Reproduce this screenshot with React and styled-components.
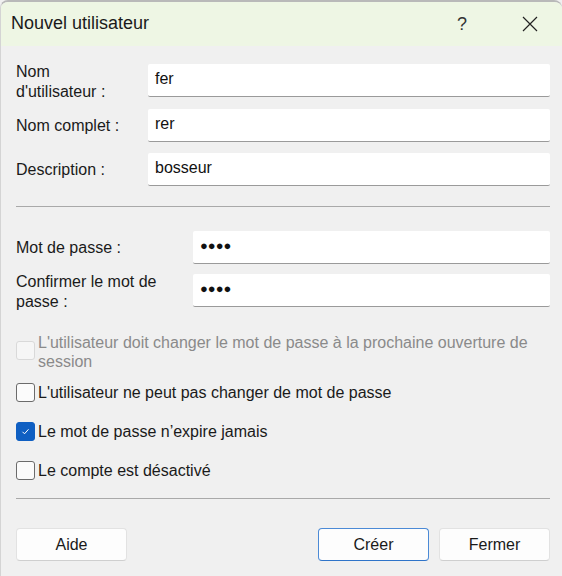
import React from 'react';
import styled, { createGlobalStyle } from 'styled-components';

const Global = createGlobalStyle`
  html, body { margin: 0; padding: 0; background: #f0f0f0; }
  body { font-family: "Liberation Sans", Arial, sans-serif; }
`;

const Window = styled.div`
  width: 562px;
  height: 576px;
  box-sizing: border-box;
  background: #f0f0f0;
  border-top: 2px solid #b9b9b9;
  border-left: 1px solid #d4d4d4;
  border-top-left-radius: 8px;
  border-top-right-radius: 8px;
  overflow: hidden;
  display: flex;
  flex-direction: column;
`;

const TitleBar = styled.div`
  height: 44px;
  flex: none;
  background: #eef6e4;
  display: flex;
  align-items: center;
  padding-left: 10px;
  font-size: 18px;
  color: #1a1a1a;
`;

const Title = styled.div`
  flex: 1;
  padding-bottom: 2px;
`;

const TitleBtn = styled.div`
  width: 68px;
  height: 44px;
  box-sizing: border-box;
  padding-left: 4px;
  display: flex;
  align-items: center;
  justify-content: center;
  font-size: 18px;
  color: #333;
`;

const Body = styled.div`
  padding: 18px 12px 0 15px;
  display: flex;
  flex-direction: column;
`;

const Row = styled.div`
  display: grid;
  grid-template-columns: ${p => p.$label}px 1fr;
  align-items: center;
  margin-bottom: ${p => p.$gap}px;
`;

const Label = styled.div`
  height: 33px;
  display: flex;
  align-items: center;
  padding-top: ${p => (p.$two ? 3 : 1)}px;
  box-sizing: border-box;
  font-size: 16px;
  line-height: 20px;
  color: #1a1a1a;
`;

const Field = styled.div`
  height: 33px;
  box-sizing: border-box;
  background: #fff;
  border-bottom: 1px solid #9a9a9a;
  border-radius: 2px;
  display: flex;
  align-items: center;
  padding: 0 7px 3px;
  font-size: 16px;
  color: #111;
`;

const Dots = styled.span`
  font-size: 13px;
`;

const Separator = styled.div`
  height: 1px;
  background: #a9a9a9;
  margin: ${p => p.$m};
`;

const Check = styled.div`
  display: flex;
  align-items: flex-start;
  gap: 3px;
  font-size: 16px;
  line-height: 19px;
  color: ${p => (p.$disabled ? '#8a8a8a' : '#1a1a1a')};
  margin-bottom: ${p => p.$gap}px;
`;

const Box = styled.div`
  flex: none;
  width: 17px;
  height: 17px;
  margin-top: ${p => p.$top}px;
  border-radius: 3px;
  border: 1px solid ${p => (p.$checked ? '#0f5fc2' : p.$disabled ? '#d9d9d9' : '#6b6b6b')};
  background: ${p => (p.$checked ? '#0f5fc2' : p.$disabled ? '#f6f6f6' : '#fbfbfb')};
  display: flex;
  align-items: center;
  justify-content: center;
`;

const Buttons = styled.div`
  display: flex;
  align-items: center;
  gap: 10px;
`;

const Button = styled.button`
  width: 111px;
  height: 33px;
  box-sizing: border-box;
  background: #fdfdfd;
  border: 1px solid ${p => (p.$primary ? '#4b8ad6' : '#e2e2e2')};
  border-bottom-color: ${p => (p.$primary ? '#2f74c9' : '#cfcfcf')};
  border-radius: 4px;
  font-family: "Liberation Sans", Arial, sans-serif;
  font-size: 16px;
  color: #1a1a1a;
  padding: 1px 0 0;
`;

const Spacer = styled.div`
  flex: 1;
`;

const CheckBox = ({ checked, disabled, top = 1 }) => (
  <Box $checked={checked} $disabled={disabled} $top={top}>
    {checked && (
      <svg width="11" height="11" viewBox="0 0 11 11">
        <path d="M2.5 5.8 L4.5 7.8 L8.5 3.3" fill="none" stroke="#fff" strokeWidth="1" />
      </svg>
    )}
  </Box>
);

export default function App() {
  return (
    <Window>
      <Global />
      <TitleBar>
        <Title>Nouvel utilisateur</Title>
        <TitleBtn>?</TitleBtn>
        <TitleBtn>
          <svg width="16" height="16" viewBox="0 0 16 16">
            <path d="M1 1 L15 15 M15 1 L1 15" stroke="#222" strokeWidth="1.2" />
          </svg>
        </TitleBtn>
      </TitleBar>
      <Body>
        <Row $label={132} $gap={12}>
          <Label $two>Nom<br />d'utilisateur :</Label>
          <Field>fer</Field>
        </Row>
        <Row $label={132} $gap={11}>
          <Label>Nom complet :</Label>
          <Field>rer</Field>
        </Row>
        <Row $label={132} $gap={0}>
          <Label>Description :</Label>
          <Field>bosseur</Field>
        </Row>
        <Separator $m="20px 0 24px" />
        <Row $label={177} $gap={10}>
          <Label>Mot de passe :</Label>
          <Field><Dots>●●●●</Dots></Field>
        </Row>
        <Row $label={177} $gap={0}>
          <Label $two>Confirmer le mot de<br />passe :</Label>
          <Field><Dots>●●●●</Dots></Field>
        </Row>
        <div style={{ height: 26 }} />
        <Check $disabled $gap={12}>
          <CheckBox disabled top={8} />
          <span>L'utilisateur doit changer le mot de passe à la prochaine ouverture de session</span>
        </Check>
        <Check $gap={20}>
          <CheckBox top={0} />
          <span>L'utilisateur ne peut pas changer de mot de passe</span>
        </Check>
        <Check $gap={20}>
          <CheckBox checked top={0} />
          <span>Le mot de passe n’expire jamais</span>
        </Check>
        <Check $gap={0}>
          <CheckBox top={0} />
          <span>Le compte est désactivé</span>
        </Check>
        <Separator $m="18px 0 29px" />
        <Buttons>
          <Button>Aide</Button>
          <Spacer />
          <Button $primary>Créer</Button>
          <Button>Fermer</Button>
        </Buttons>
      </Body>
    </Window>
  );
}
